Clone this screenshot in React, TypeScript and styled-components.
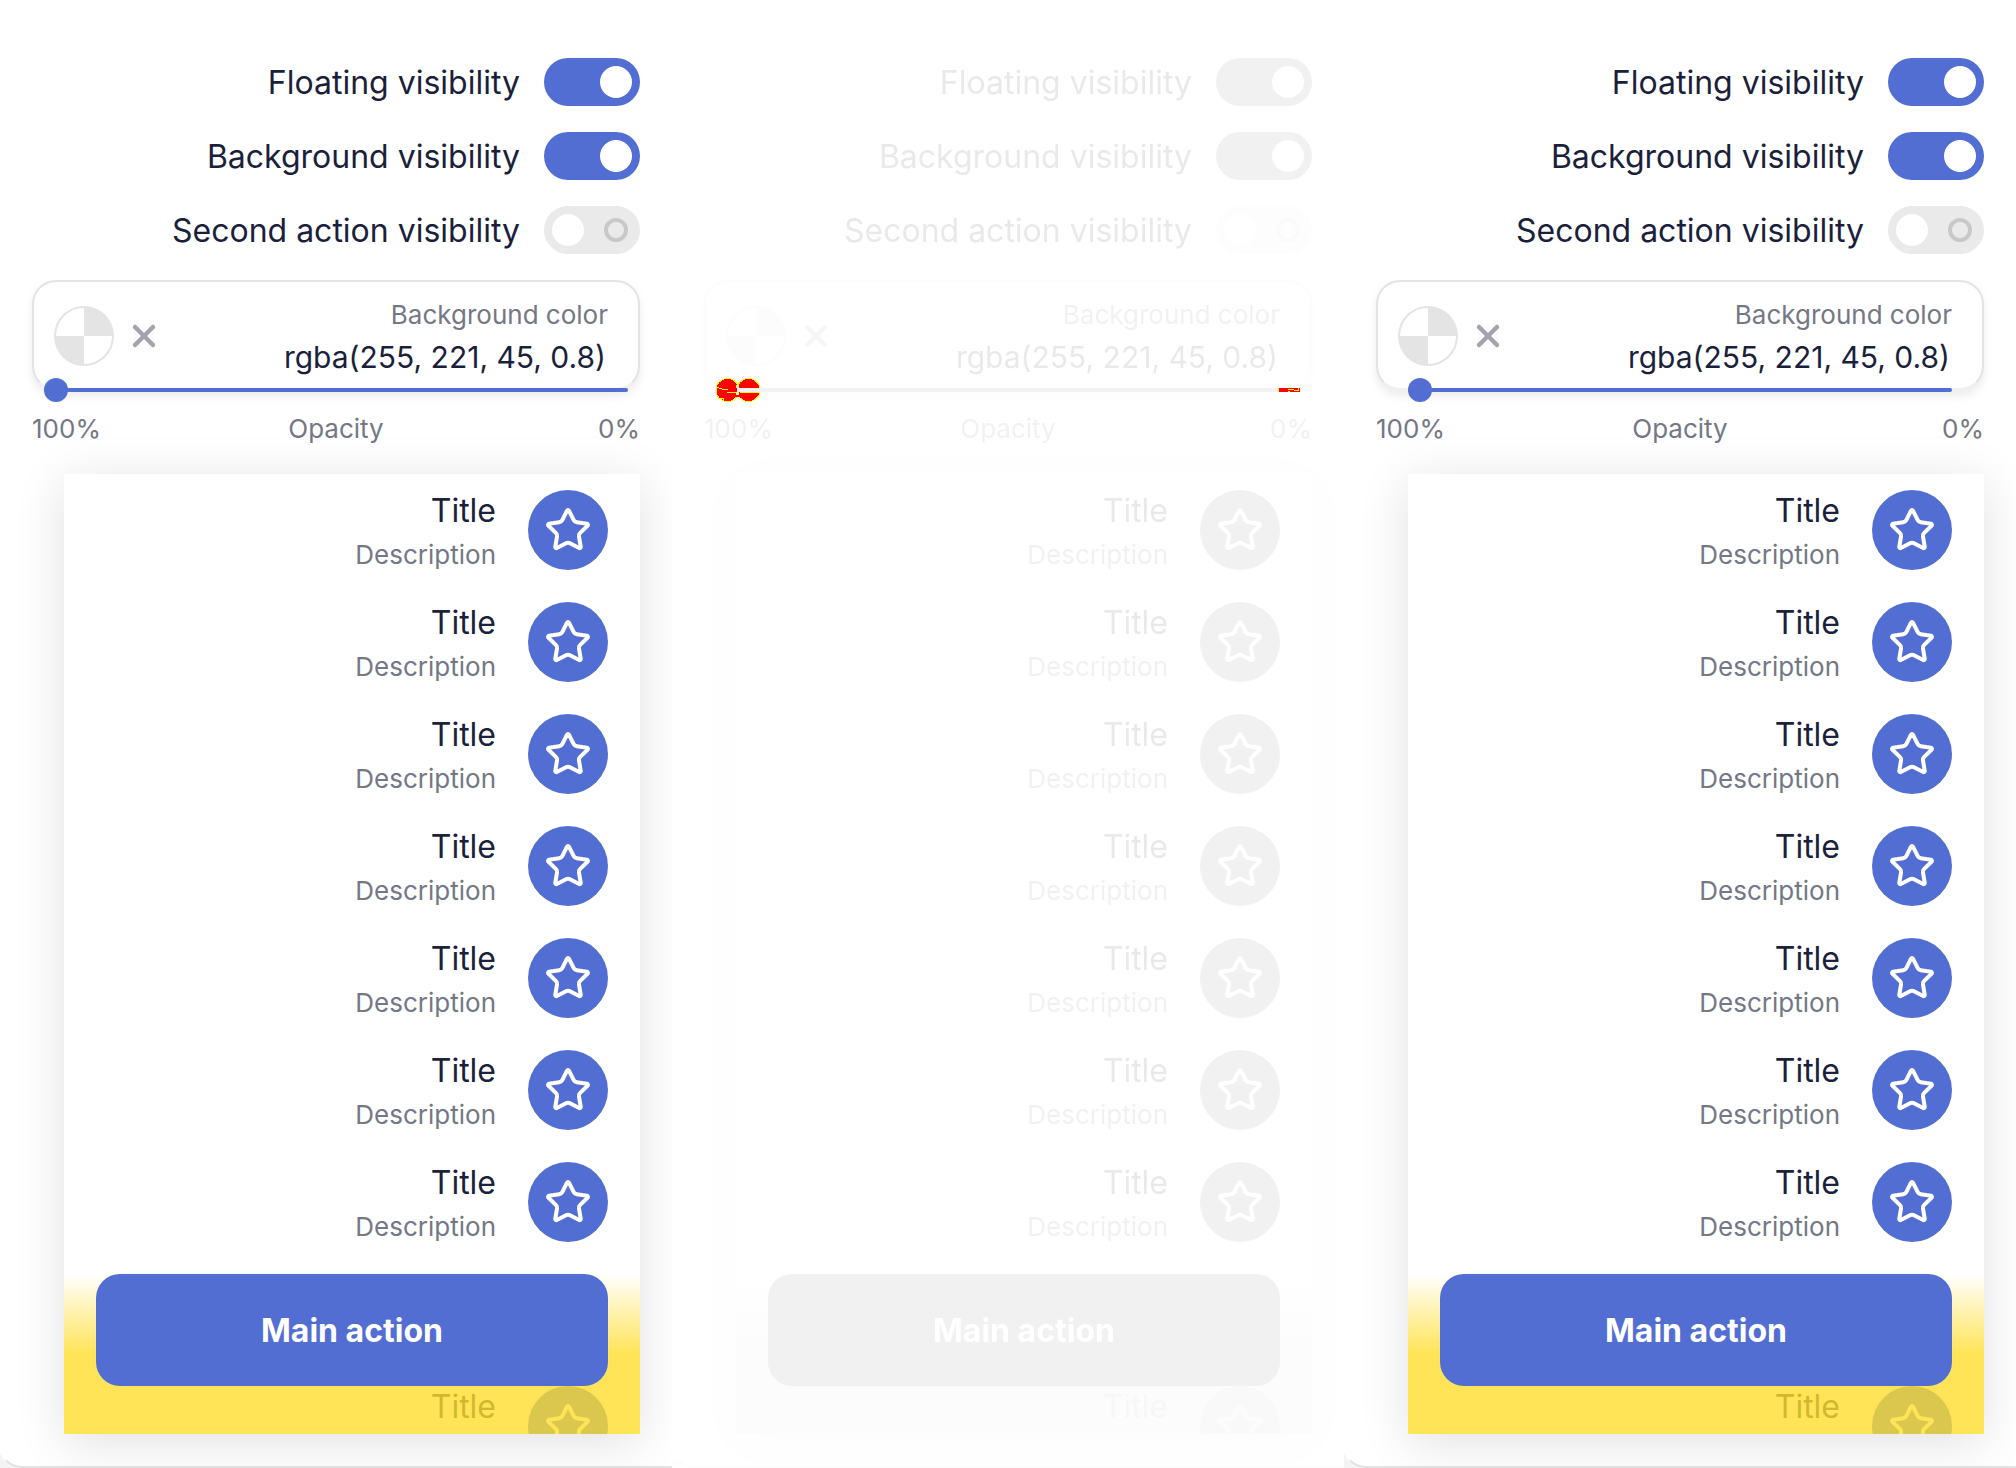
import React, { useId, useState } from "react";
import styled, { createGlobalStyle, css } from "styled-components";
import { Star, X } from "lucide-react";

const blue = "#526ed3";
const ink = "#1b1f3b";
const muted = "#747785";
const line = "#e4e4e4";

const GlobalStyle = createGlobalStyle`
  *, *::before, *::after { box-sizing: border-box; }
  body {
    margin: 0;
    background: #fff;
    color: ${ink};
    font-family: Inter, Roboto, "Liberation Sans", sans-serif;
    font-size: 32px;
  }
`;

const Page = styled.main`
  display: grid;
  grid-template-columns: repeat(3, minmax(0, 1fr));
`;

const Panel = styled.section`
  overflow: hidden;
  background: #f4f4f4;
`;

const Surface = styled.div`
  margin-left: -2px;
  padding: 58px 32px 32px;
  border: solid ${line};
  border-width: 0 0 2px 2px;
  border-left-color: #fff;
  border-bottom-left-radius: 24px;
  background: #fff;
`;

const FadedPanel = styled(Panel)`
  filter: grayscale(1) opacity(0.1);
`;

const Compare = styled.div`
  position: relative;
`;

const Settings = styled.div`
  display: flex;
  flex-direction: column;
  gap: 26px;
`;

const SwitchRow = styled.label`
  display: flex;
  justify-content: flex-end;
  align-items: center;
  gap: 24px;
  line-height: 46px;
`;

const SwitchText = styled.span`
  padding-top: 2px;
`;

const Switch = styled.input`
  appearance: none;
  display: flex;
  align-items: center;
  justify-content: space-between;
  width: 96px;
  height: 48px;
  margin: 0;
  padding: 0 8px;
  border-radius: 24px;
  background: #eaeaea;

  &::before {
    content: "";
    width: 32px;
    height: 32px;
    border-radius: 50%;
    background: #fff;
  }

  &::after {
    content: "";
    width: 24px;
    height: 24px;
    margin-right: 4px;
    border: 4px solid #c8c8c8;
    border-radius: 50%;
  }

  &:checked {
    justify-content: flex-end;
    background: ${blue};
  }

  &:checked::after {
    display: none;
  }
`;

const Field = styled.div`
  display: flex;
  align-items: center;
  padding: 11px 30px 9px 20px;
  border: 2px solid ${line};
  border-bottom-color: #f0f0f0;
  border-radius: 24px;
  background: #fff;
  box-shadow: 0 6px 10px rgba(0, 0, 0, 0.08);
`;

const Swatch = styled.button`
  width: 60px;
  height: 60px;
  padding: 0;
  border: 2px solid ${line};
  border-radius: 50%;
  background: conic-gradient(${line} 25%, #fff 0 50%, ${line} 0 75%, #fff 0);
`;

const Clear = styled.button`
  display: flex;
  margin-left: 12px;
  padding: 0;
  border: 0;
  background: none;
  color: #a4a4b1;
`;

const FieldText = styled.div`
  display: flex;
  flex: 1;
  min-width: 0;
  flex-direction: column;
  gap: 2px;
  padding-top: 4px;
  text-align: right;
`;

const FieldLabel = styled.label`
  color: ${muted};
  font-size: 26px;
  line-height: 36px;
`;

const FieldInput = styled.input`
  width: 100%;
  height: 44px;
  padding: 0 2px;
  border: 0;
  background: none;
  color: ${ink};
  font: inherit;
  font-size: 30px;
  line-height: 44px;
  text-align: right;
`;

const thumb = css`
  appearance: none;
  width: 24px;
  height: 24px;
  margin-top: -10px;
  border: 0;
  border-radius: 50%;
  background: ${blue};
`;

const SliderBox = styled.div<{ $inset: number }>`
  position: relative;
  display: flex;
  margin: -12px ${(p) => p.$inset}px 0;
`;

const Slider = styled.input`
  appearance: none;
  flex: 1;
  min-width: 0;
  height: 24px;
  margin: 0;
  background: none;

  &::-webkit-slider-runnable-track {
    height: 4px;
    border-radius: 2px;
    background: ${blue};
  }

  &::-webkit-slider-thumb {
    ${thumb}
  }
`;

const Scale = styled.div`
  display: grid;
  grid-template-columns: 1fr auto 1fr;
  margin: 7px 0 25px;
  color: ${muted};
  font-size: 26px;
  line-height: 40px;

  & > :last-child {
    text-align: right;
  }
`;

const Preview = styled.div`
  position: relative;
  height: 960px;
  margin-left: 32px;
  box-shadow: 0 8px 48px rgba(0, 0, 0, 0.12);
`;

const List = styled.ul`
  height: 100%;
  margin: 0;
  padding: 0;
  overflow: hidden;
  list-style: none;
  background: #fff;
`;

const Item = styled.li`
  display: flex;
  justify-content: flex-end;
  align-items: center;
  gap: 32px;
  height: 112px;
  padding: 0 32px;
  text-align: right;
`;

const ItemText = styled.div`
  display: flex;
  flex-direction: column;
  gap: 4px;
  padding-top: 2px;
`;

const ItemTitle = styled.span`
  line-height: 44px;
`;

const ItemDescription = styled.span`
  color: ${muted};
  font-size: 26px;
  line-height: 36px;
`;

const Avatar = styled.span`
  display: flex;
  justify-content: center;
  align-items: center;
  width: 80px;
  height: 80px;
  border-radius: 50%;
  background: ${blue};
  color: #fff;
`;

const Floating = styled.footer`
  position: absolute;
  inset: auto 0 0;
  padding: 0 32px 48px;
  background: linear-gradient(rgba(255, 221, 45, 0), rgba(255, 221, 45, 0.8) 80px);
`;

const MainAction = styled.button`
  display: block;
  width: 100%;
  height: 112px;
  border: 0;
  border-radius: 24px;
  background: ${blue};
  color: #fff;
  font: inherit;
  font-weight: 700;
`;

const Marks = styled.div`
  position: absolute;
  inset: 378px 44px auto;
  display: flex;
  justify-content: space-between;
  align-items: center;
`;

const rows = Array.from({ length: 9 }, (_, i) => i);

function Toggle({ label, on = false }: { label: string; on?: boolean }) {
  return (
    <SwitchRow>
      <SwitchText>{label}</SwitchText>
      <Switch type="checkbox" defaultChecked={on} />
    </SwitchRow>
  );
}

function Demo({ inset }: { inset: number }) {
  const id = useId();
  const [color, setColor] = useState("rgba(255, 221, 45, 0.8)");
  return (
    <Surface>
      <Settings>
        <Toggle label="Floating visibility" on />
        <Toggle label="Background visibility" on />
        <Toggle label="Second action visibility" />
        <Field>
          <Swatch type="button" aria-label="Pick color" />
          <Clear type="button" aria-label="Clear" onClick={() => setColor("")}>
            <X size={36} strokeWidth={3} />
          </Clear>
          <FieldText>
            <FieldLabel htmlFor={id}>Background color</FieldLabel>
            <FieldInput id={id} value={color} onChange={(e) => setColor(e.target.value)} />
          </FieldText>
        </Field>
      </Settings>
      <SliderBox $inset={inset}>
        <Slider type="range" aria-label="Opacity" min={0} max={100} defaultValue={0} />
      </SliderBox>
      <Scale>
        <span>100%</span>
        <span>Opacity</span>
        <span>0%</span>
      </Scale>
      <Preview>
        <List>
          {rows.map((i) => (
            <Item key={i}>
              <ItemText>
                <ItemTitle>Title</ItemTitle>
                <ItemDescription>Description</ItemDescription>
              </ItemText>
              <Avatar>
                <Star size={48} strokeWidth={2} />
              </Avatar>
            </Item>
          ))}
        </List>
        <Floating>
          <MainAction type="button">Main action</MainAction>
        </Floating>
      </Preview>
    </Surface>
  );
}

function DiffMarks() {
  return (
    <Marks>
      <svg width="44" height="24" viewBox="0 0 44 24" shapeRendering="crispEdges">
        <g fill="#f00" stroke="#ff0" strokeWidth="1">
          <circle cx="11.5" cy="12" r="11.5" />
          <circle cx="32.5" cy="12" r="11.5" />
        </g>
        <path d="M19 9h6v10h-6z" fill="#f00" />
        <path d="M21 7h2v3h21v4H23v3h-2z" fill="#f0f0f0" />
        <path
          d="M0 9.5h3M3 10.5h3M6 11.5h6M11 14.5h9M24 14.5h19M2 20.5h6M7.5 20v3M20.5 7v3M20.5 14v3"
          fill="none"
          stroke="#ff0"
        />
      </svg>
      <svg width="22" height="4" viewBox="0 0 22 4" shapeRendering="crispEdges">
        <path d="M0 0h22v4H0z" fill="#f00" />
        <path d="M.5 0v4M10 1.5h6M16 2.5h4M10 3.5h2M20.5 0v3" stroke="#ff0" />
      </svg>
    </Marks>
  );
}

export default function App() {
  return (
    <Page>
      <GlobalStyle />
      <Panel>
        <Demo inset={12} />
      </Panel>
      <Compare>
        <FadedPanel>
          <Demo inset={12} />
        </FadedPanel>
        <DiffMarks />
      </Compare>
      <Panel>
        <Demo inset={32} />
      </Panel>
    </Page>
  );
}
